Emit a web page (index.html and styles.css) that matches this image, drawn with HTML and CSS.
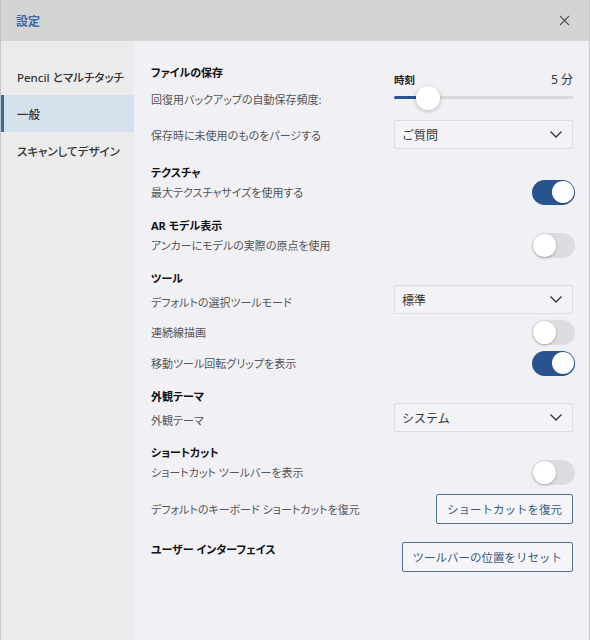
FILE: index.html
```html
<!DOCTYPE html>
<html lang="ja">
  <head>
    <meta charset="UTF-8" />
    <meta name="viewport" content="width=device-width, initial-scale=1.0" />
    <title>設定</title>
    <link rel="stylesheet" href="styles.css">
  </head>
  <body>
    <div class="dialog">
      <header class="dialog-header">
        <h1>設定</h1>
        <button class="close-btn" aria-label="閉じる">
          <svg width="11" height="11" viewBox="0 0 11 11">
            <path d="M1 1 L10 10 M10 1 L1 10" stroke="#555" stroke-width="1.2" fill="none" />
          </svg>
        </button>
      </header>

      <div class="dialog-body">
        <nav class="sidebar">
          <a href="#" class="nav-item">Pencil とマルチタッチ</a>
          <a href="#" class="nav-item active">一般</a>
          <a href="#" class="nav-item">スキャンしてデザイン</a>
        </nav>

        <main class="content">
          <!-- ファイルの保存 -->
          <section class="group group-first">
            <div class="row row-slider">
              <div class="row-text">
                <h2>ファイルの保存</h2>
                <span class="label">回復用バックアップの自動保存頻度:</span>
              </div>
              <div class="slider">
                <div class="slider-head">
                  <span class="slider-name">時刻</span>
                  <span class="slider-value">5 分</span>
                </div>
                <div class="slider-track">
                  <div class="slider-fill" style="width: 19%"></div>
                  <div class="slider-thumb" style="left: 19%"></div>
                </div>
              </div>
            </div>
            <div class="row">
              <span class="label">保存時に未使用のものをパージする</span>
              <div class="select">
                <span>ご質問</span>
                <svg class="chevron" width="12" height="7" viewBox="0 0 12 7"><path d="M0.5 0.5 L6 6 L11.5 0.5" /></svg>
              </div>
            </div>
          </section>

          <section class="group">
            <h2>テクスチャ</h2>
            <div class="row">
              <span class="label">最大テクスチャサイズを使用する</span>
              <div class="toggle on"></div>
            </div>
          </section>

          <section class="group">
            <h2>AR モデル表示</h2>
            <div class="row">
              <span class="label">アンカーにモデルの実際の原点を使用</span>
              <div class="toggle"></div>
            </div>
          </section>

          <section class="group">
            <h2>ツール</h2>
            <div class="row">
              <span class="label label-low">デフォルトの選択ツールモード</span>
              <div class="select">
                <span>標準</span>
                <svg class="chevron" width="12" height="7" viewBox="0 0 12 7"><path d="M0.5 0.5 L6 6 L11.5 0.5" /></svg>
              </div>
            </div>
            <div class="row">
              <span class="label">連続線描画</span>
              <div class="toggle"></div>
            </div>
            <div class="row">
              <span class="label">移動ツール回転グリップを表示</span>
              <div class="toggle on"></div>
            </div>
          </section>

          <section class="group">
            <h2>外観テーマ</h2>
            <div class="row">
              <span class="label label-low">外観テーマ</span>
              <div class="select">
                <span>システム</span>
                <svg class="chevron" width="12" height="7" viewBox="0 0 12 7"><path d="M0.5 0.5 L6 6 L11.5 0.5" /></svg>
              </div>
            </div>
          </section>

          <section class="group">
            <h2>ショートカット</h2>
            <div class="row">
              <span class="label">ショートカット ツールバーを表示</span>
              <div class="toggle"></div>
            </div>
            <div class="row row-button">
              <span class="label">デフォルトのキーボード ショートカットを復元</span>
              <button class="outline-btn">ショートカットを復元</button>
            </div>
          </section>

          <section class="group group-last">
            <div class="row row-top">
              <h2 class="row-heading">ユーザー インターフェイス</h2>
              <button class="outline-btn">ツールバーの位置をリセット</button>
            </div>
          </section>
        </main>
      </div>
    </div>
  </body>
</html>
```

FILE: styles.css
```css
* {
  box-sizing: border-box;
}

body {
  margin: 0;
  font-family: "Noto Sans", "Noto Sans CJK JP", sans-serif;
  color: #222;
  background: #f0f0f5;
}

.dialog {
  display: flex;
  flex-direction: column;
  height: 640px;
  border-left: 1px solid #c6c6c6;
  border-right: 1px solid #c6c6c6;
}

/* header bar */
.dialog-header {
  display: flex;
  align-items: center;
  justify-content: space-between;
  height: 41px;
  padding: 0 19px 0 15px;
  background: #d4d4d4;
}

.dialog-header h1 {
  margin: 0;
  font-size: 12px;
  font-weight: 700;
  color: #3b6aa5;
}

.close-btn {
  display: flex;
  padding: 0;
  border: none;
  background: none;
  cursor: pointer;
}

.dialog-body {
  display: flex;
  flex: 1;
}

/* left navigation */
.sidebar {
  display: flex;
  flex-direction: column;
  width: 133px;
  padding-top: 17px;
  background: #ebebeb;
}

.nav-item {
  display: flex;
  align-items: center;
  height: 37px;
  padding-left: 16px;
  font-size: 11.5px;
  font-weight: 500;
  color: #333;
  text-decoration: none;
  font-feature-settings: "palt";
}

.nav-item.active {
  background: #d5e2ee;
  box-shadow: inset 3px 0 0 #3b6aa5;
}

/* settings list */
.content {
  flex: 1;
  padding: 24px 16px 0 17px;
  background: #f0f0f5;
}

.group {
  margin-top: 11px;
}

.group-first {
  margin-top: 0;
  margin-bottom: 14px;
}

.group-last {
  margin-top: 18px;
}

h2 {
  margin: 0;
  font-size: 11px;
  line-height: 16px;
  font-weight: 700;
  color: #111;
  font-feature-settings: "palt";
}

.group > h2 {
  padding-top: 2px;
  margin-bottom: -2px;
}

.row {
  display: flex;
  align-items: center;
  justify-content: space-between;
  min-height: 26px;
}

.row + .row {
  margin-top: 5px;
}

.row-button {
  margin-top: 9px !important;
}

.row-top {
  align-items: flex-start;
}

.label {
  font-size: 11px;
  color: #555;
  font-feature-settings: "palt";
}

.label-low {
  padding-top: 5px;
}

/* autosave slider */
.row-slider {
  align-items: flex-start;
  margin-bottom: 12px;
}

.row-text {
  display: flex;
  flex-direction: column;
}

.row-text .label {
  margin-top: 11px;
  line-height: 16px;
}

.slider {
  width: 179px;
  margin-top: 7px;
}

.slider-head {
  display: flex;
  justify-content: space-between;
  line-height: 16px;
}

.slider-name {
  font-size: 10.5px;
  font-weight: 700;
  color: #222;
}

.slider-value {
  font-size: 12px;
  color: #333;
}

.slider-track {
  position: relative;
  height: 3px;
  margin-top: 8px;
  border-radius: 2px;
  background: #dadade;
}

.slider-fill {
  height: 100%;
  border-radius: 2px;
  background: #27548f;
}

.slider-thumb {
  position: absolute;
  top: 50%;
  width: 24px;
  height: 24px;
  border-radius: 50%;
  background: #fff;
  box-shadow: 0 1px 4px rgba(0, 0, 0, 0.25);
  transform: translate(-50%, -50%);
}

/* dropdowns */
.select {
  display: flex;
  align-items: center;
  justify-content: space-between;
  width: 179px;
  height: 29px;
  padding: 0 10px 0 7px;
  border: 1px solid #dcdce1;
  border-radius: 2px;
  background: #f3f3f7;
  font-size: 12px;
  color: #333;
}

.chevron path {
  fill: none;
  stroke: #333;
  stroke-width: 1.3;
}

/* switches */
.toggle {
  position: relative;
  width: 43px;
  height: 25px;
  margin-right: -2px;
  border-radius: 13px;
  background: #dcdce1;
}

.toggle::after {
  content: "";
  position: absolute;
  top: 1px;
  left: 1px;
  width: 23px;
  height: 23px;
  border-radius: 50%;
  background: #fff;
  box-shadow: 0 1px 3px rgba(0, 0, 0, 0.25);
}

.toggle.on {
  background: #27548f;
}

.toggle.on::after {
  top: 1.5px;
  left: auto;
  right: 1.5px;
  width: 22px;
  height: 22px;
  box-shadow: none;
}

/* outlined buttons */
.outline-btn {
  height: 30px;
  padding: 0 10px;
  border: 1.5px solid #4f709b;
  border-radius: 2px;
  background: #f5f5f9;
  font-family: inherit;
  font-size: 11.5px;
  color: #3a5880;
  cursor: pointer;
}
```
